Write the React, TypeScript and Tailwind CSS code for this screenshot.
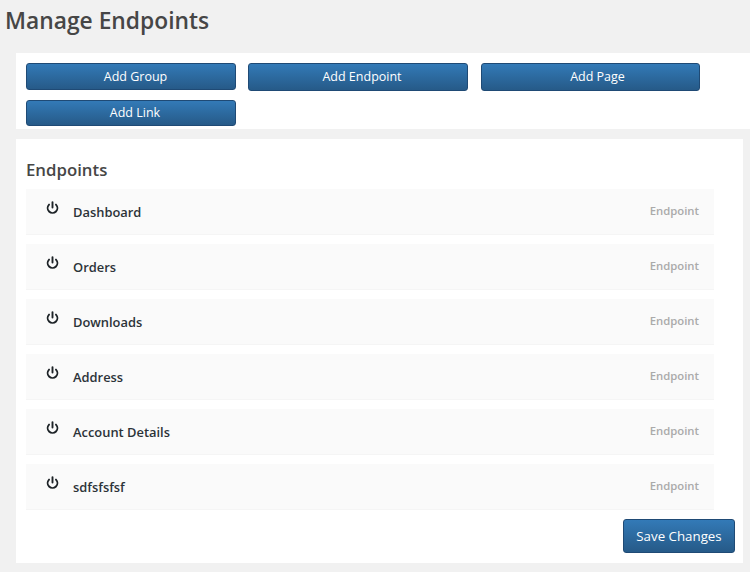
import { Power } from 'lucide-react';

const endpoints = ['Dashboard', 'Orders', 'Downloads', 'Address', 'Account Details', 'sdfsfsfsf'];

const btn =
  'flex items-center justify-center rounded-[3px] border border-[#1f4a75] bg-gradient-to-b from-[#337ab7] to-[#265a88] text-white';

export default function App() {
  return (
    <div className="h-[572px] w-[750px] overflow-hidden bg-[#f1f1f1] font-['Open_Sans',sans-serif]">
      <h1 className="pl-[5px] pt-[5px] text-[22.8px] leading-[32px] font-semibold text-[#464646]">Manage Endpoints</h1>

      <div className="mt-[16px] ml-4 h-[76px] bg-white pl-[10px] pt-[10px]">
        <div className="flex gap-x-3">
          <button className={`${btn} h-[27px] w-[210px] pl-[9px] pt-[2px] text-[12.5px]`}>Add Group</button>
          <button className={`${btn} h-[28px] w-[220px] pl-2 pt-px text-[12.5px]`}>Add Endpoint</button>
          <button className={`${btn} ml-px h-[28px] w-[219px] pl-[14px] pt-px text-[12.5px]`}>Add Page</button>
        </div>
        <button className={`${btn} mt-[9px] h-[26px] w-[210px] pl-2 text-[12.5px]`}>Add Link</button>
      </div>

      <div className="mt-[10px] ml-4 h-[424px] w-[727px] bg-white px-[10px]">
        <h2 className="pt-[19px] text-[16.8px] leading-[24px] font-semibold text-[#464646]">Endpoints</h2>
        <div className="mt-[7px] flex w-[688px] flex-col gap-[9px]">
          {endpoints.map((name) => (
            <div
              key={name}
              className="flex h-[46px] items-center border-b border-[#f5f5f5] bg-[#fafafa] pl-[20px] pr-[15px]"
            >
              <Power className="mb-[9px] h-[13px] w-[13px] text-[#1d2327]" strokeWidth={3.5} />
              <span className="ml-[14px] pt-[2px] text-[12.9px] font-semibold text-[#2c3338]">{name}</span>
              <span className="ml-auto mb-px text-[11.3px] font-semibold text-[#aaaaaa]">Endpoint</span>
            </div>
          ))}
        </div>
        <div className="mt-[9px] flex justify-end">
          <button className={`${btn} mr-[-2px] h-[34px] w-[112px] pt-px text-[13.3px]`}>Save Changes</button>
        </div>
      </div>
    </div>
  );
}
